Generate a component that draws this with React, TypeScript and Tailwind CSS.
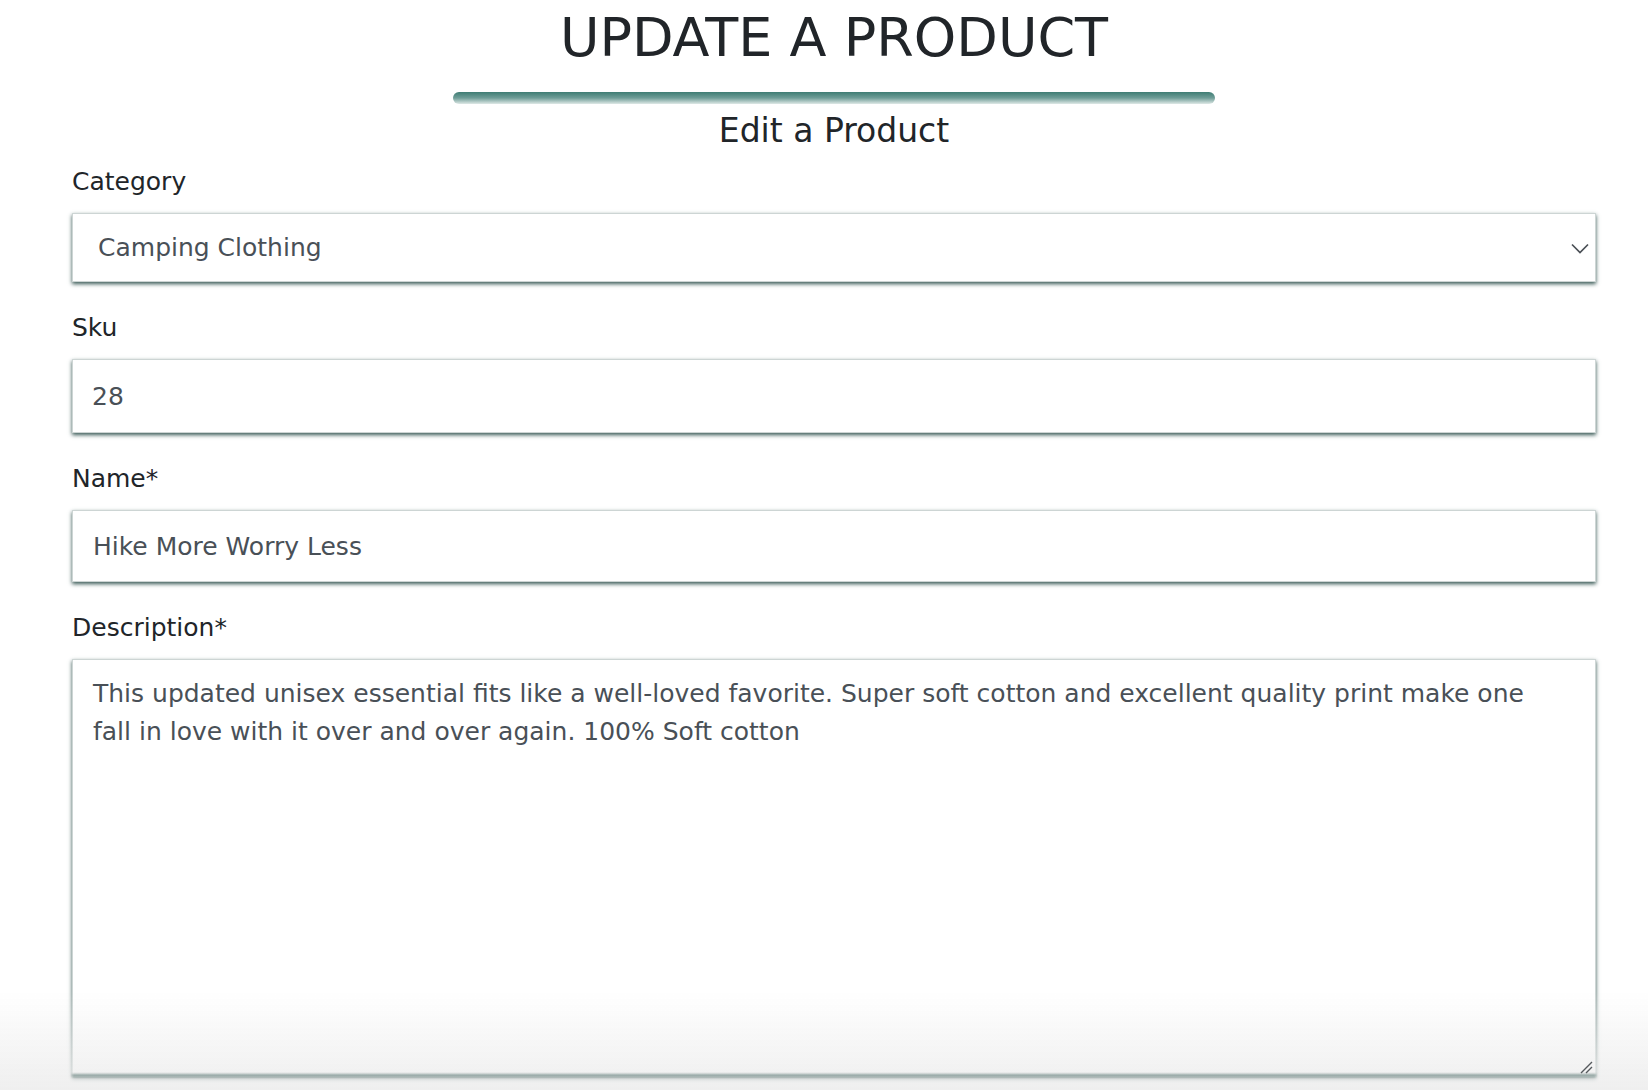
const font = { fontFamily: '"DejaVu Sans", "Noto Sans", sans-serif' };

function Label({ children }: { children: React.ReactNode }) {
  return <label className="block text-[25px] leading-[36px] text-[#212529] mb-[13px]">{children}</label>;
}

const boxCls =
  "block w-full bg-white border border-[#cdd5d4] shadow-[0_2px_4px_rgba(55,88,84,1)] text-[25px] text-[#495057] outline-none";

export default function App() {
  return (
    <div className="relative min-h-screen bg-white" style={font}>
      <div className="ml-[72px] w-[1524px]">
        <h1 className="pt-[11px] text-center text-[54px] leading-[54px] font-normal text-[#212529]">UPDATE A PRODUCT</h1>
        <div className="mx-auto mt-[27px] h-[12px] w-[762px] rounded-full bg-gradient-to-b from-[#3e7d74] via-[#6f9e98] to-[#dfe9e7]" />
        <h2 className="mt-[7px] text-center text-[33px] leading-[40px] text-[#212529]">Edit a Product</h2>

        <form className="mt-[13px] flex flex-col">
          <div className="mb-[28px]">
            <Label>Category</Label>
            <div className="relative">
              <select
                defaultValue="camping"
                className={boxCls + " h-[69px] appearance-none pl-[25px] pr-[50px]"}
                style={font}
              >
                <option value="camping">Camping Clothing</option>
              </select>
              <svg
                className="pointer-events-none absolute right-[6px] top-1/2 -translate-y-1/2"
                width="20"
                height="12"
                viewBox="0 0 20 12"
                fill="none"
              >
                <path d="M2 2.5l8 8 8-8" stroke="#4a4f55" strokeWidth="1.7" />
              </svg>
            </div>
          </div>

          <div className="mb-[28px]">
            <Label>Sku</Label>
            <input readOnly value="28" className={boxCls + " h-[74px] px-[19px]"} style={font} />
          </div>

          <div className="mb-[28px]">
            <Label>Name*</Label>
            <input readOnly value="Hike More Worry Less" className={boxCls + " h-[72px] px-[20px]"} style={font} />
          </div>

          <div>
            <Label>Description*</Label>
            <div className="relative">
              <textarea
                readOnly
                value="This updated unisex essential fits like a well-loved favorite. Super soft cotton and excellent quality print make one fall in love with it over and over again. 100% Soft cotton"
                className={boxCls + " h-[418px] pl-[20px] pr-[40px] pt-[15px] leading-[38px] resize-none"}
                style={font}
              />
            </div>
          </div>
        </form>
      </div>

      <div className="pointer-events-none fixed inset-x-0 bottom-0 h-[100px] bg-gradient-to-b from-[rgba(238,238,238,0)] to-[rgba(236,236,236,0.85)]" />

      {/* textarea grip and lower edge sit above the fade, as in the screenshot */}
      <div className="pointer-events-none fixed bottom-[13px] left-[72px] z-10 h-[3px] w-[1524px] bg-[rgba(60,95,90,0.55)] blur-[1px]" />
      <svg
        className="pointer-events-none fixed bottom-[16px] left-[1579px] z-10"
        width="14"
        height="14"
        viewBox="0 0 14 14"
        fill="none"
      >
        <path d="M2 13L13 2M7 13l6-6" stroke="#55595c" strokeWidth="1.4" />
      </svg>
    </div>
  );
}
